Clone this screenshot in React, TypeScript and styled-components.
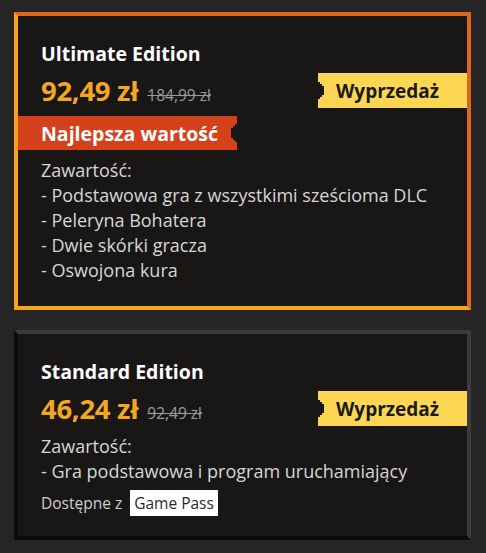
import styled, { createGlobalStyle } from 'styled-components';

const GlobalStyle = createGlobalStyle`
  html, body {
    margin: 0;
    padding: 0;
    background: #252525;
    font-family: 'Open Sans', 'Noto Sans', sans-serif;
  }
`;

const Page = styled.div`
  display: flex;
  flex-direction: column;
  gap: 20px;
  padding: 12px 15px 13px 14px;
`;

const Card = styled.section<{ $featured?: boolean }>`
  box-sizing: border-box;
  width: 457px;
  background: #181716;
  border: 4px solid;
  border-color: ${({ $featured }) =>
    $featured ? '#dc661c #dc661c #f5a21f #f5a21f' : '#3b3b3b #3b3b3b #0b0b0b #0b0b0b'};
  padding: 24px 0 ${({ $featured }) => ($featured ? '23px' : '20px')};
`;

const Section = styled.div`
  padding-left: 23px;
`;

const Title = styled.h2`
  margin: 0;
  font-size: 19.5px;
  line-height: 28px;
  font-weight: 700;
  color: #ffffff;
`;

const PriceRow = styled.div`
  display: flex;
  align-items: center;
  justify-content: space-between;
  margin-top: 5px;
  height: 35px;
`;

const Prices = styled.div`
  display: flex;
  align-items: baseline;
  gap: 9px;
  padding-left: 23px;
`;

const Price = styled.span`
  font-size: 27.5px;
  font-weight: 700;
  color: #f5a623;
  letter-spacing: -0.3px;
`;

const OldPrice = styled.span`
  font-size: 15.5px;
  color: #9a9a9a;
  text-decoration: line-through;
`;

const SaleBadge = styled.div`
  box-sizing: border-box;
  width: 149px;
  height: 35px;
  display: flex;
  align-items: center;
  padding-left: 18px;
  background: #fdd654;
  color: #1a1a1a;
  font-size: 19px;
  font-weight: 700;
  clip-path: polygon(
    0 0, 100% 0, 100% 100%, 0 100%,
    0 26px, 2px 26px, 2px 24px, 4px 24px, 4px 22px, 6px 22px,
    6px 13px, 4px 13px, 4px 11px, 2px 11px, 2px 9px, 0 9px
  );
`;

const ValueBanner = styled.div`
  box-sizing: border-box;
  width: 219px;
  height: 34px;
  margin-top: 8px;
  display: flex;
  align-items: center;
  padding-left: 23px;
  background: #d5411b;
  color: #ffffff;
  font-size: 19.5px;
  font-weight: 700;
  clip-path: polygon(
    0 0, 100% 0,
    100% 8px, calc(100% - 2px) 8px, calc(100% - 2px) 10px, calc(100% - 4px) 10px,
    calc(100% - 4px) 12px, calc(100% - 6px) 12px, calc(100% - 6px) 22px,
    calc(100% - 4px) 22px, calc(100% - 4px) 24px, calc(100% - 2px) 24px,
    calc(100% - 2px) 26px, 100% 26px,
    100% 100%, 0 100%
  );
`;

const Contents = styled.ul`
  list-style: none;
  margin: 8px 0 0;
  padding: 0 0 0 23px;
  color: #d6d6d6;
  font-size: 18px;
  line-height: 25px;
`;

const Availability = styled.div`
  display: flex;
  align-items: center;
  gap: 8px;
  margin-top: 6px;
  padding-left: 23px;
  color: #d0d0d0;
  font-size: 15.5px;
`;

const PassTag = styled.span`
  display: inline-flex;
  align-items: center;
  height: 26px;
  padding: 0 4px;
  background: #ffffff;
  color: #2a2a2a;
  font-size: 15.5px;
`;

type Edition = {
  name: string;
  price: string;
  oldPrice: string;
  best?: boolean;
  items: string[];
  pass?: string;
};

const editions: Edition[] = [
  {
    name: 'Ultimate Edition',
    price: '92,49 zł',
    oldPrice: '184,99 zł',
    best: true,
    items: [
      '- Podstawowa gra z wszystkimi sześcioma DLC',
      '- Peleryna Bohatera',
      '- Dwie skórki gracza',
      '- Oswojona kura',
    ],
  },
  {
    name: 'Standard Edition',
    price: '46,24 zł',
    oldPrice: '92,49 zł',
    items: ['- Gra podstawowa i program uruchamiający'],
    pass: 'Game Pass',
  },
];

function EditionCard({ edition }: { edition: Edition }) {
  return (
    <Card $featured={edition.best}>
      <Section>
        <Title>{edition.name}</Title>
      </Section>
      <PriceRow>
        <Prices>
          <Price>{edition.price}</Price>
          <OldPrice>{edition.oldPrice}</OldPrice>
        </Prices>
        <SaleBadge>Wyprzedaż</SaleBadge>
      </PriceRow>
      {edition.best && <ValueBanner>Najlepsza wartość</ValueBanner>}
      <Contents>
        <li>Zawartość:</li>
        {edition.items.map((item) => (
          <li key={item}>{item}</li>
        ))}
      </Contents>
      {edition.pass && (
        <Availability>
          Dostępne z <PassTag>{edition.pass}</PassTag>
        </Availability>
      )}
    </Card>
  );
}

export default function App() {
  return (
    <>
      <GlobalStyle />
      <Page>
        {editions.map((e) => (
          <EditionCard key={e.name} edition={e} />
        ))}
      </Page>
    </>
  );
}
